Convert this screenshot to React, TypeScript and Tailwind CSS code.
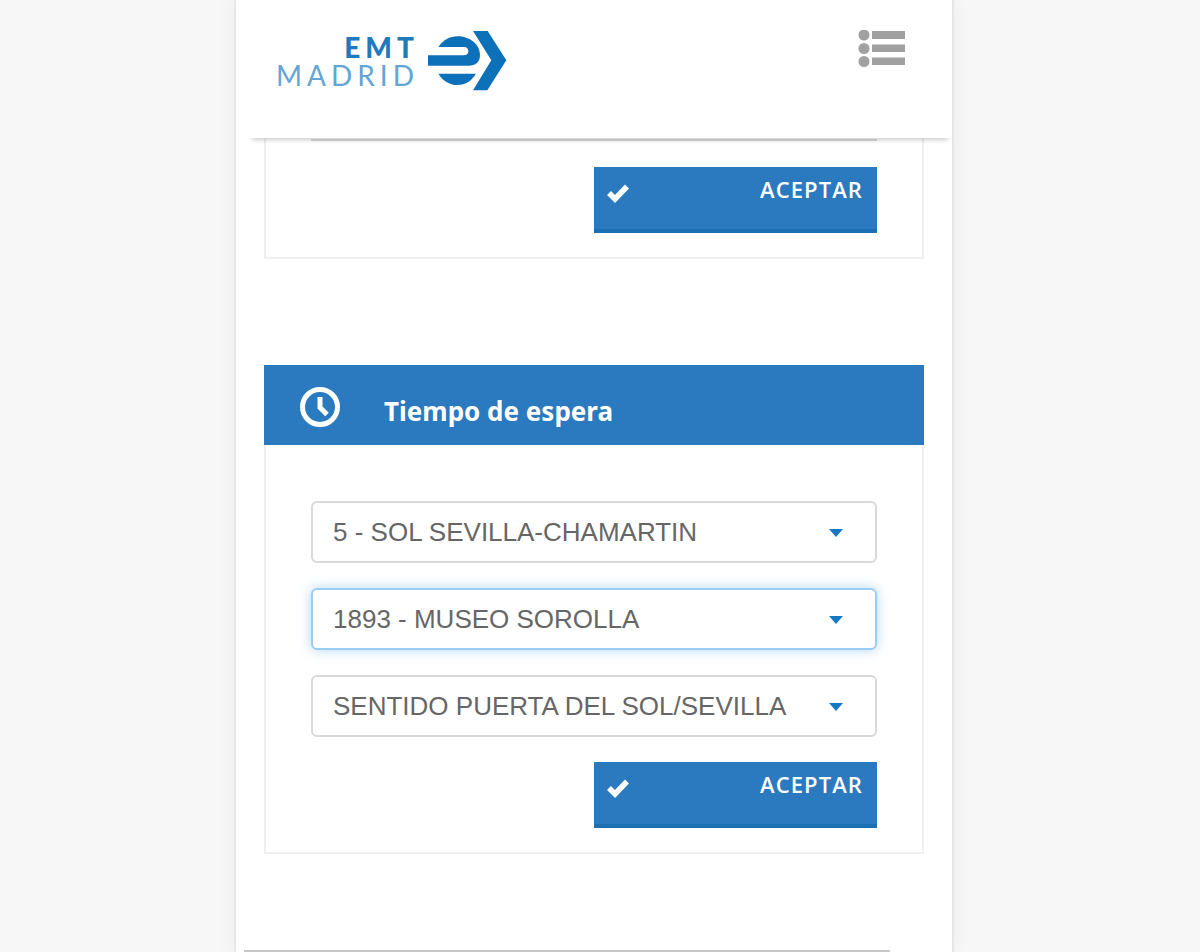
import { useState } from "react";

const LINES = ["5 - SOL SEVILLA-CHAMARTIN", "27 - EMBAJADORES-PLAZA CASTILLA"];
const STOPS = ["1893 - MUSEO SOROLLA", "1895 - RUBEN DARIO"];
const DIRECTIONS = ["SENTIDO PUERTA DEL SOL/SEVILLA", "SENTIDO CHAMARTIN"];

function EmtMark() {
  return (
    <svg viewBox="490 31 240 186" className="h-[62px] w-20" fill="#0d71b9" aria-hidden="true">
      <path d="M628 34h44l56 88-57 90h-43l55-90z" />
      <path d="M524 82c14-20 34-32 58-32 36 0 67 24 67 56 0 22-13 32-34 32H493v-31h108c9 0 13-5 13-12s-4-13-13-13z" />
      <path d="M524 162h112c-10 20-30 34-55 34-24 0-44-13-57-34z" />
    </svg>
  );
}

function Header() {
  return (
    <header className="sticky top-0 z-10 bg-white">
      <div className="relative z-10 flex items-start justify-between bg-white pt-[30px] pr-[46px] pb-[46px] pl-10">
        <a href="#" aria-label="EMT Madrid, inicio" className="flex items-center gap-2">
          <span className="flex flex-col items-end font-[Lato,sans-serif] text-[28px] leading-7 tracking-[5px]">
            <span className="font-black text-[#2079bb]">EMT</span>
            <span className="font-normal text-[#63a5d5]">MADRID</span>
          </span>
          <EmtMark />
        </a>
        <button type="button" aria-label="Menú">
          <svg viewBox="0 0 48 38" className="h-[38px] w-12" fill="#a0a0a0" aria-hidden="true">
            <circle cx="6" cy="5" r="5.5" />
            <circle cx="6" cy="18.5" r="5.5" />
            <circle cx="6" cy="31.5" r="5.5" />
            <path d="M14 1h33v8H14zM14 14.500h33v7.500H14zM14 27.500h33v7.500H14z" />
          </svg>
        </button>
      </div>
      <div className="absolute right-1 bottom-0 left-4 h-4 shadow-[0_2px_5px_rgba(0,0,0,0.2)]" />
    </header>
  );
}

function AcceptButton() {
  return (
    <button
      type="button"
      className="flex h-[66px] w-1/2 items-start justify-between self-end border-b-4 border-[#1b6fb1] bg-[#2b79be] pt-2 pr-[14px] pl-3 text-white"
    >
      <svg viewBox="0 0 24 20" className="mt-2 h-5 w-6" aria-hidden="true">
        <path d="M3 10l6 6L21 3.500" fill="none" stroke="currentColor" strokeWidth="5.500" />
      </svg>
      <span className="font-['Open_Sans',sans-serif] text-[22px] leading-7 font-semibold tracking-wider">
        ACEPTAR
      </span>
    </button>
  );
}

type SelectFieldProps = {
  label: string;
  options: string[];
  highlighted?: boolean;
};

function SelectField({ label, options, highlighted }: SelectFieldProps) {
  const [value, setValue] = useState(options[0]);

  return (
    <div className="relative">
      <select
        aria-label={label}
        value={value}
        onChange={(e) => setValue(e.target.value)}
        className={`block h-[62px] w-full appearance-none rounded-md border-2 bg-white pr-16 pl-5 font-['Liberation_Sans',Arial,sans-serif] text-[26px] text-[#666] outline-none ${
          highlighted
            ? "border-[#9bcdf3] shadow-[0_0_12px_rgba(102,175,233,0.5)]"
            : "border-[#d9d9d9]"
        }`}
      >
        {options.map((option) => (
          <option key={option}>{option}</option>
        ))}
      </select>
      <svg
        viewBox="0 0 14 8"
        className="pointer-events-none absolute top-7 right-[34px] h-2 w-3.5"
        fill="#1478c4"
        aria-hidden="true"
      >
        <path d="M0 0h14L7 8z" />
      </svg>
    </div>
  );
}

export default function App() {
  return (
    <div className="min-h-screen bg-[#f7f7f7] pr-3">
      <div className="mx-auto min-h-screen max-w-[720px] border-x-2 border-[#e6e6e6] bg-white shadow-[0_0_20px_rgba(0,0,0,0.05)]">
        <Header />

        <main className="px-7">
          {/* Bloque anterior, queda por debajo de la cabecera */}
          <section className="flex flex-col gap-[26px] border-2 border-t-0 border-[#f0f0f0] px-[45px] pb-6">
            <div className="h-[3px] border-b-2 border-[#d9d9d9]" />
            <AcceptButton />
          </section>

          <section className="mt-[106px]">
            <h2 className="flex h-20 items-center gap-11 bg-[#2b79be] px-9 font-['Noto_Sans',sans-serif] text-[26px] font-bold text-white">
              <svg viewBox="0 0 40 40" className="mt-1 size-10" fill="none" stroke="currentColor" aria-hidden="true">
                <circle cx="20" cy="20" r="17.500" strokeWidth="5" />
                <path d="M20 10v10.500l7 7" strokeWidth="5" />
              </svg>
              <span className="mt-3">Tiempo de espera</span>
            </h2>
            <form
              onSubmit={(e) => e.preventDefault()}
              className="flex flex-col gap-[25px] border-2 border-t-0 border-[#f0f0f0] px-[45px] pt-14 pb-6"
            >
              <SelectField label="Línea" options={LINES} />
              <SelectField label="Parada" options={STOPS} highlighted />
              <SelectField label="Sentido" options={DIRECTIONS} />
              <AcceptButton />
            </form>
          </section>
        </main>

        <hr className="mt-24 mr-[62px] ml-2 border-t-2 border-[#c8c8c8]" />
      </div>
    </div>
  );
}
